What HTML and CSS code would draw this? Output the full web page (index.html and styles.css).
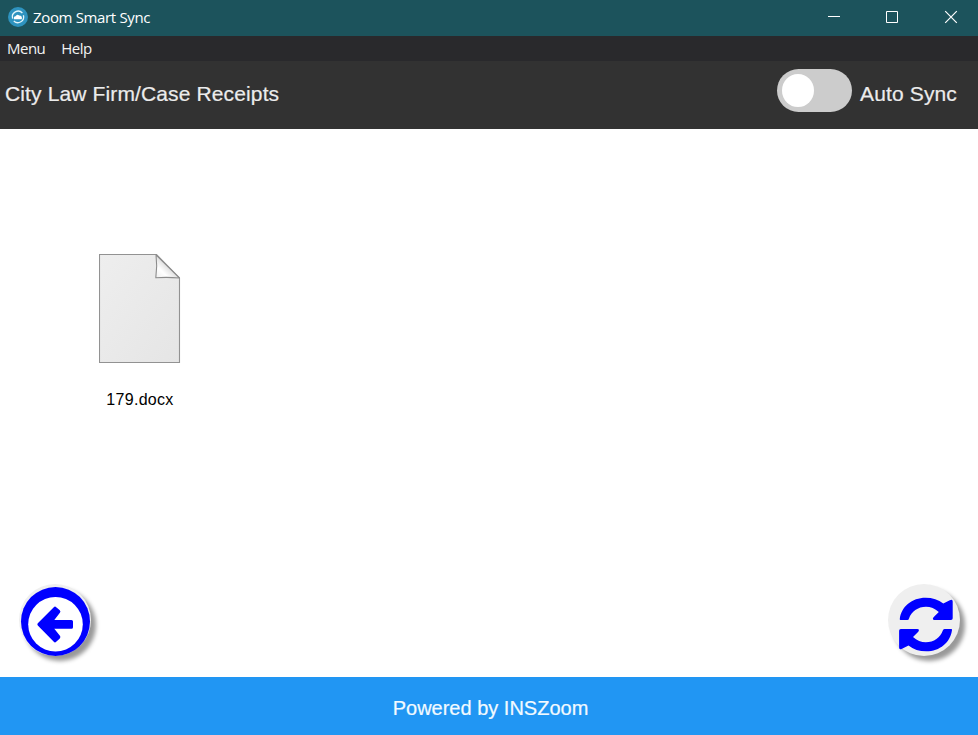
FILE: index.html
```html
<!DOCTYPE html>
<html lang="en">
<head>
<meta charset="utf-8">
<title>Zoom Smart Sync</title>
<link rel="stylesheet" href="styles.css">
</head>
<body>
<div class="window">
  <div class="titlebar">
    <svg class="app-icon" width="20" height="20" viewBox="0 0 20 20">
      <circle cx="10" cy="10" r="10" fill="#2e93bf"/>
      <path d="M4.6 11.6A5.8 5.8 0 0 1 14.4 6M15.4 8.2A5.8 5.8 0 0 1 5.8 14" fill="none" stroke="#e4f6fb" stroke-width="1.3"/>
      <path d="M6 12.2Q5.2 9.8 7.5 9.3Q9 6.7 11.2 8.6Q14.6 8.9 13.8 12.2Z" fill="#fff"/>
    </svg>
    <span class="app-name">Zoom Smart Sync</span>
    <svg class="controls" width="132" height="14" viewBox="0 0 132 14" fill="none" stroke="#fff">
      <path d="M1 6.500H13" />
      <path d="M59.500 1.500H70.500V12.500H59.500Z"/>
      <path d="M118.200 1.200L129.800 12.800M129.800 1.200L118.200 12.800" stroke-width="1.200"/>
    </svg>
  </div>
  <nav class="menubar"><span class="menu-item">Menu</span><span class="help-item">Help</span></nav>
  <header class="header">
    <h1 class="path">City Law Firm/Case Receipts</h1>
    <div class="toggle"><div class="knob"></div></div>
    <span class="sync-label">Auto Sync</span>
  </header>
  <main class="content">
    <div class="file">
      <svg width="82" height="110" viewBox="0 0 82 110">
        <defs>
          <linearGradient id="paper" x1="0" y1="0" x2="1" y2="1"><stop offset="0" stop-color="#eee"/><stop offset="1" stop-color="#e5e5e5"/></linearGradient>
          <linearGradient id="fold" x1="0" y1="1" x2=".55" y2=".45"><stop offset="0" stop-color="#eee"/><stop offset=".5" stop-color="#fff"/><stop offset="1" stop-color="#d8d8d8"/></linearGradient>
        </defs>
        <path d="M.5.5H57.500L80.500 24V108.500H.5Z" fill="url(#paper)" stroke="#929292" stroke-width="1.100"/>
        <path d="M57 .8Q58.500 12 56.800 23.800Q68 22.800 80.500 24Z" fill="url(#fold)" stroke="#8c8c8c" stroke-width="1.100" stroke-linejoin="round"/>
      </svg>
      <span class="file-name">179.docx</span>
    </div>
    <div class="actions">
      <div class="round">
        <svg width="72" height="72" viewBox="0 0 72 72">
          <circle cx="36.500" cy="37.500" r="34.500" fill="#00f"/>
          <circle cx="36.500" cy="40.300" r="27.300" fill="#fff"/>
          <path d="M18.800 39.200L34.800 23.200Q36 22 37.200 23.200L40.800 26.200Q42 27.400 40.900 28.800L35.300 35.900H52.500Q54 35.900 54 37.400V43.200Q54 44.700 52.500 44.700H35.300L40.900 51.800Q42 53.200 40.800 54.400L37.200 57.800Q36 59 34.800 57.800L18.800 41.400Q17.800 40.300 18.800 39.200Z" fill="#00f"/>
        </svg>
      </div>
      <div class="round">
        <svg width="72" height="72" viewBox="0 0 72 72" fill="#00f">
          <path id="sync-arrow" d="M11.800 35C13.300 22.500 24 13.700 37.500 13.700C44.500 13.700 50.500 15.700 55.300 19.600L61.800 16.300Q64.700 14.800 64.700 17.500V34.300Q64.700 36 63 36H46.500Q43.800 36 45.500 33.300L50.800 28C47 24.500 42.500 22.700 38 22.700C30 22.700 23.300 27.500 21 34.500Q20.700 36 19.300 36H12.500Q11.600 36 11.800 35Z"/>
          <use href="#sync-arrow" transform="rotate(180 37.900 40.500)"/>
        </svg>
      </div>
    </div>
  </main>
  <footer class="footer">Powered by INSZoom</footer>
</div>
</body>
</html>
```
FILE: styles.css
```css
* { box-sizing: border-box; }
body { margin: 0; font-family: "Liberation Sans", Arial, sans-serif; }
.window { width: 978px; height: 735px; display: flex; flex-direction: column; background: #fff; overflow: hidden; }
.titlebar { height: 36px; flex: none; display: flex; align-items: center; padding: 0 19px 2px 8px; background: #1c535c; color: #fff; font: 15px "Open Sans", sans-serif; }
.app-name { margin-left: 5px; letter-spacing: -.35px; }
.controls { margin-left: auto; }
.menubar { height: 25px; flex: none; display: flex; align-items: center; gap: 16px; padding: 0 7px 2px; background: #29292c; color: #f2f2f2; font: 15px "Open Sans", sans-serif; letter-spacing: -.5px; }
.header { height: 68px; flex: none; display: flex; align-items: center; padding: 0 21px 2px 5px; background: #323232; color: #ececec; font-size: 21px; letter-spacing: .13px; -webkit-text-stroke: .2px #ececec; }
.path { margin: 0; font-size: inherit; font-weight: 400; }
.toggle { width: 75px; height: 43px; margin: -8px 8px 0 auto; padding: 5px; border-radius: 22px; background: #ccc; }
.knob { width: 32px; height: 33px; border-radius: 50%; background: #fff; }
.content { flex: 1; display: flex; flex-direction: column; justify-content: space-between; }
.file { width: 82px; margin: 125px 0 0 99px; display: flex; flex-direction: column; align-items: center; }
.file-name { margin-top: 27px; font-size: 16px; line-height: 18px; letter-spacing: .3px; }
.actions { display: flex; justify-content: space-between; padding: 0 18px 21px 19px; }
.round { width: 72px; height: 72px; border-radius: 50%; background: #efefef; box-shadow: 5px 5px 4px #999; }
.round svg { display: block; }
.footer { height: 58px; flex: none; display: flex; align-items: center; justify-content: center; padding: 5px 0 0 3px; background: #2196f3; color: #f2faff; font-size: 20px; -webkit-text-stroke: .2px #f2faff; }
```
